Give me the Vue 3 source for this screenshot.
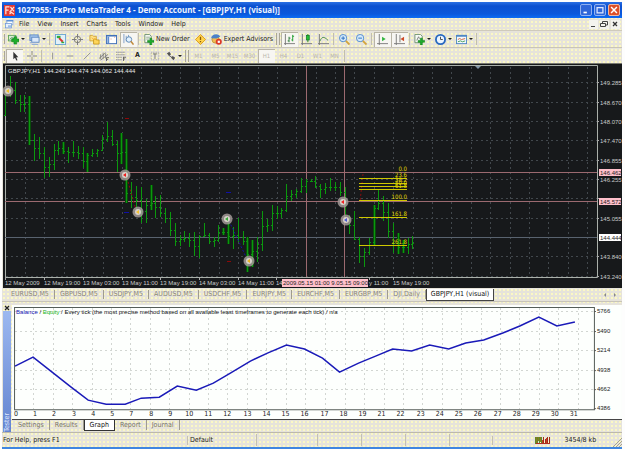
<script setup>
import { ref } from 'vue'

const icons = {
  app: '<rect width="12" height="12" fill="#e23a34"/><path d="M2 10V2h4M2 5.500h3M7 2l4 5M11 2L6 8M6 10l2-2 3 2" fill="none" stroke="#ffe4dc" stroke-width="1.300"/>',
  doc: '<rect x="2.500" y=".5" width="8" height="6" fill="#fff" stroke="#7fa5d8"/><rect x="2" y="0" width="9" height="2" fill="#5b8fd6"/><rect x=".5" y="4.500" width="8" height="6" fill="#eaf2fc" stroke="#6c98d4"/><rect x="4" y="7" width="4" height="3" fill="#9dbce8"/>',
  newChart: '<rect x=".5" y="1.500" width="8" height="6" fill="#dbead6" stroke="#5fa45c"/><path d="M2 6l2-2 2 1 2-2" stroke="#2d8a35" fill="none"/><path d="M4 5.500h2.500V3h3v2.500H12v3H9.500V11h-3V8.500H4z" fill="#1fae2b" stroke="#0d7d19" stroke-width=".6"/>',
  profiles: '<rect x="1" y="1" width="9" height="6" fill="#a9c8ee" stroke="#5b87c2"/><rect x="3" y="3.500" width="8" height="5.500" fill="#dbe9fa" stroke="#5b87c2"/><path d="M1 9.500h7M3 11.500h7" stroke="#8caad4"/>',
  market: '<rect x=".5" y=".5" width="11" height="11" fill="#e2f0f8" stroke="#6aa5cf"/><path d="M2 2h4v2.500H2z" fill="#2fae3c"/><path d="M4.500 4.500l4 4" stroke="#d83a2e" stroke-width="2.200" fill="none"/><path d="M7 8.500h3v1.500H7z" fill="#2fae3c"/>',
  target: '<circle cx="6" cy="6" r="3.500" fill="none" stroke="#777"/><path d="M6 0v5M6 7v5M0 6h5M7 6h5" stroke="#777"/>',
  folders: '<path d="M1 1.500h3l1 1h3v5H1z" fill="#ffe083" stroke="#d0a53a"/><path d="M5 5.500h2l1 1h3v4.500H5z" fill="#ffd65a" stroke="#c99b20"/><path d="M3 4l2 2 3-1" stroke="#f5b53c" fill="none"/>',
  terminal: '<rect x=".5" y="1.500" width="11" height="9" fill="#fff" stroke="#3d6fb8"/><path d="M.5 2h11" stroke="#3d6fb8" stroke-width="1.500"/><path d="M2.500 3v7" stroke="#5f8ed0" stroke-width="2"/><path d="M9 3.500h1M5 5.500h1" stroke="#d5886c"/>',
  tester: '<path d="M1 0v10M3.500 2v6M6 1v5" stroke="#7c9cc8"/><circle cx="6.500" cy="6" r="3" fill="#e3f2ff" stroke="#5a86b4"/><path d="M8.500 8l3 3.500" stroke="#c08a3c" stroke-width="1.700"/>',
  order: '<path d="M2 .5h5l2 2v7H2z" fill="#f4f8f1" stroke="#6d8f6d"/><path d="M3.500 3.500h4M3.500 5.500h3" stroke="#95a895"/><path d="M5 7h2.500V4.500h2V7H12v2H9.500v3h-2V9H5z" fill="#1fae2b" stroke="#0d7d19" stroke-width=".6"/>',
  warning: '<path d="M6 .5L11.500 6 6 11.500.5 6z" fill="#ffd34d" stroke="#d99818"/><path d="M6 3v3.500M6 7.500V9" stroke="#8b5a08" stroke-width="1.400"/>',
  expert: '<circle cx="5" cy="6" r="4" fill="#f0bd55" stroke="#b58024" stroke-width=".7"/><path d="M0 4.500c1-5.500 9-5.500 10-1.500L6 5z" fill="#4b81c8"/><circle cx="8.500" cy="8.500" r="3.300" fill="#dd3a27"/><rect x="7.300" y="7.300" width="2.400" height="2.400" fill="#fff"/>',
  bars: '<path d="M1.500 0v12M0 10.500h12" stroke="#777"/><path d="M5.500 3v6M4 7.500h1.500M5.500 4.500H7" stroke="#2a7b38"/><path d="M9.500 1v7M8 6.500h1.500M9.500 2.500H11" stroke="#169a26"/>',
  candles: '<path d="M1.500 0v12M0 10.500h12" stroke="#777"/><path d="M7.500 0v9" stroke="#147a20"/><rect x="6" y="1.500" width="3" height="5" fill="#24c236" stroke="#147a20" stroke-width=".8"/>',
  line: '<path d="M1.500 0v12M0 10.500h12" stroke="#777"/><path d="M2 8c2-5 4-6 9-1" fill="none" stroke="#498a4c"/>',
  zoomIn: '<circle cx="4.500" cy="4.500" r="4" fill="#d4e9fb" stroke="#4d88cb"/><path d="M2.500 4.500h4M4.500 2.500v4" stroke="#266dbe"/><path d="M7.500 7.500l4 4" stroke="#d3a43b" stroke-width="2"/>',
  zoomOut: '<circle cx="4.500" cy="4.500" r="4" fill="#d4e9fb" stroke="#4d88cb"/><path d="M2.500 4.500h4" stroke="#266dbe"/><path d="M7.500 7.500l4 4" stroke="#d3a43b" stroke-width="2"/>',
  scroll: '<path d="M2.500 0v12M0 10.500h12" stroke="#777"/><path d="M5.500 3l4 2.500-4 2.500z" fill="#33b540"/>',
  shift: '<path d="M2.500 0v12M0 10.500h12M6.500 1v8" stroke="#777"/><path d="M11 3l-4 2.500L11 8z" fill="#cf4a26"/>',
  indicator: '<path d="M1 .5h6l2 2v7H1z" fill="#f7faf5" stroke="#6d8f6d"/><path d="M3 7l2-4 1 2" fill="none" stroke="#777"/><path d="M4.500 7H7V4.500h2V7h2.500v2H9v3H7V9H4.500z" fill="#1fae2b" stroke="#0d7d19" stroke-width=".6"/>',
  clock: '<circle cx="6" cy="6" r="5" fill="#eaf4ff" stroke="#2869c0" stroke-width="2"/><path d="M6 3v3h2.500" fill="none" stroke="#444"/>',
  template: '<rect x=".5" y="1.500" width="11" height="9" fill="#f3f9ff" stroke="#4e86c4"/><path d="M.5 2h11" stroke="#4e86c4" stroke-width="2"/><path d="M2 6l2-1 2 1 4-1" fill="none" stroke="#c9603a"/><path d="M2 8.500l3-1 2 1 3-1" fill="none" stroke="#3f9a50"/>',
  cursor: '<path d="M4 1v9l2-2 1.500 3.500L9 11 7.500 7.500H10z" fill="#333"/>',
  cross: '<path d="M6 0v5M6 7v5M0 6h5M7 6h5" stroke="#777"/>',
  vline: '<path d="M5.500 2v8" stroke="#888"/>',
  hline: '<path d="M2 6h8" stroke="#888"/>',
  trend: '<path d="M2 10l8-8" stroke="#888"/>',
  channel: '<path d="M0 9l8-7M2 11l9-7M2 4v6M5 2v7M8 3v6" stroke="#777" fill="none"/><path d="M9 8h3M9 8v4M9 10h2" stroke="#555" fill="none"/>',
  fibo: '<path d="M0 1.500h11M0 4.500h11M0 7.500h7M0 10.500h7" stroke="#888" stroke-dasharray="2 .5"/><path d="M9 7v5M9 7.500h3M9 9.500h2" stroke="#555"/>',
  label: '<rect x="1.500" y="1.500" width="9" height="9" fill="none" stroke="#999" stroke-dasharray="1 1"/><path d="M3.500 3.500h5M6 3.500v6" stroke="#666"/>',
  arrows: '<path d="M1 3l3-2 2 3-2 2zM6 8l2-2 3 2-2 3z" fill="#555"/><path d="M3 5l6 4" stroke="#555"/>',
}

const menus = ['File', 'View', 'Insert', 'Charts', 'Tools', 'Window', 'Help']

const mainBar = [
  { icon: 'newChart', drop: true, name: 'New chart' },
  { icon: 'profiles', drop: true, name: 'Profiles' },
  { sep: true },
  { icon: 'market', name: 'Market Watch' },
  { icon: 'target', name: 'Data Window' },
  { icon: 'folders', name: 'Navigator' },
  { icon: 'terminal', name: 'Terminal' },
  { icon: 'tester', on: true, name: 'Strategy Tester' },
  { sep: true },
  { icon: 'order', text: 'New Order' },
  { icon: 'warning', name: 'MetaEditor' },
  { icon: 'expert', text: 'Expert Advisors' },
  { sep: true, grip: true },
  { icon: 'bars', on: true, name: 'Bar chart' },
  { icon: 'candles', name: 'Candlesticks' },
  { icon: 'line', name: 'Line chart' },
  { sep: true },
  { icon: 'zoomIn', name: 'Zoom in' },
  { icon: 'zoomOut', name: 'Zoom out' },
  { sep: true },
  { icon: 'scroll', on: true, name: 'Auto scroll' },
  { icon: 'shift', on: true, name: 'Chart shift' },
  { sep: true },
  { icon: 'indicator', drop: true, name: 'Indicators' },
  { icon: 'clock', drop: true, name: 'Periods' },
  { icon: 'template', drop: true, name: 'Templates' },
  { sep: true },
]

const lineTools = [
  { icon: 'cursor', on: true, name: 'Cursor' },
  { icon: 'cross', name: 'Crosshair' },
  { sep: true },
  { icon: 'vline', name: 'Vertical line' },
  { icon: 'hline', name: 'Horizontal line' },
  { icon: 'trend', name: 'Trendline' },
  { icon: 'channel', name: 'Channel' },
  { icon: 'fibo', name: 'Fibonacci' },
  { glyph: 'A', name: 'Text' },
  { icon: 'label', name: 'Text label' },
  { icon: 'arrows', drop: true, name: 'Arrows' },
  { sep: true, grip: true },
]
const periods = ['M1', 'M5', 'M15', 'M30', 'H1', 'H4', 'D1', 'W1', 'MN']

// High and low of every hourly bar, in chart units.
const bars = [
  [88, 115], [76, 97], [82, 104], [95, 112], [95, 112], [96, 145], [134, 161], [137, 159], [147, 178],
  [157, 177], [144, 170], [141, 155], [142, 154], [147, 163], [141, 157], [146, 159], [147, 168],
  [153, 172], [149, 157], [149, 157], [135, 150], [122, 142], [130, 146], [141, 172], [133, 164],
  [139, 203], [182, 208], [186, 212], [187, 223], [199, 223], [185, 210], [196, 218], [195, 217],
  [208, 223], [212, 236], [223, 246], [235, 246], [231, 242], [233, 247], [232, 256], [235, 258],
  [223, 237], [233, 244], [237, 247], [225, 242], [228, 235], [220, 244], [227, 249], [218, 242],
  [231, 245], [237, 272], [240, 267], [237, 262], [211, 251], [219, 232], [205, 231], [206, 219],
  [208, 218], [184, 212], [190, 201], [189, 198], [178, 193], [179, 193], [179, 182], [176, 188],
  [184, 198], [183, 194], [178, 191], [182, 191], [182, 196], [187, 222], [215, 234], [211, 240],
  [237, 263], [248, 267], [238, 255], [205, 245], [189, 210], [196, 221], [203, 238], [223, 253],
  [233, 254], [240, 253], [238, 254], [236, 249],
]
const barX = (i) => Math.round(5 + i * 4.85)
const closeOf = (i) => {
  const a = bars[i]
  const b = bars[i + 1] || a
  return Math.round((Math.max(a[0], b[0]) + Math.min(a[1], b[1])) / 2)
}
const barPath = bars
  .map(([h, l], i) => {
    const x = barX(i)
    const open = i ? closeOf(i - 1) : l
    return `M${x + 0.5} ${h}V${l}M${x - 1} ${open + 0.5}h2M${x} ${closeOf(i) + 0.5}h2`
  })
  .join('')
const heavyBars = [5, 12, 17, 24, 25, 30, 45, 46, 50, 51, 76, 81, 82].map((i) => ({ x: barX(i), h: bars[i][0], l: bars[i][1] }))

const gridX = Array.from({ length: 30 }, (_, i) => Math.round(25 + i * 19.38)).filter((x) => x < 594)
const prices = [
  ['149.285', 82], ['148.670', 102], ['148.070', 121], ['147.470', 140], ['146.855', 160],
  ['146.255', 179], ['', 198], ['145.055', 218], ['143.840', 256], ['143.240', 276],
]
const dates = [
  ['12 May 2009', 5], ['12 May 19:00', 44], ['13 May 03:00', 83], ['13 May 11:00', 122], ['13 May 19:00', 160],
  ['14 May 03:00', 199], ['14 May 11:00', 238], ['14', 276], ['y 11:00', 369], ['15 May 19:00', 393],
]
const fibs = [
  ['0.0', 172], ['23.6', 178], ['38.2', 183], ['50.0', 186], ['61.8', 189], ['100.0', 200], ['161.8', 217], ['261.8', 245],
]
const marks = [
  { x: 8, y: 91, c: '#f0c020' }, { x: 125, y: 175, c: '#f01818' }, { x: 138, y: 212, c: '#f5c030' },
  { x: 227, y: 219, c: '#38a838' }, { x: 249, y: 261, c: '#e8b020' }, { x: 343, y: 202, c: '#f02020' }, { x: 346, y: 220, c: '#4858d0' },
]

const chartTabs = ['EURUSD,M5', 'GBPUSD,M5', 'USDJPY,M5', 'AUDUSD,M5', 'USDCHF,M5', 'EURJPY,M5', 'EURCHF,M5', 'EURGBP,M5', 'DJI,Daily', 'GBPJPY,H1 (visual)']
const chartTab = ref('GBPJPY,H1 (visual)')
const testerTabs = ['Settings', 'Results', 'Graph', 'Report', 'Journal']
const testerTab = ref('Graph')

const balance = '15,366 33,357 52,372 71,387 88,400 106,404 125,404 141,398 159,397 177,386 196,390 213,383 230,373 250,361 267,353 286,345 304,349 322,358 339,372 358,363 375,356 392,349 411,351 429,345 448,349 465,343 483,340 502,333 519,326 538,317 556,326 574,322'
const trades = [0, 1, 2, 3, 4, 5, 7, 8, 9, 10, 11, 12, 13, 14, 15, 16, 17, 18, 19, 21, 22, 23, 24, 25, 26, 27, 28, 29, 30, 31]
const levels = [[5766, 311], [5490, 331], [5214, 350], [4938, 370], [4662, 389], [4386, 408]]
</script>

<template>
  <div class="window">
    <header class="title">
      <svg class="ico" viewBox="0 0 12 12" v-html="icons.app"></svg>
      <h1>1027955: FxPro MetaTrader 4 - Demo Account - [GBPJPY,H1 (visual)]</h1>
      <button class="win" aria-label="Minimize"><svg viewBox="0 0 12 12"><path d="M3 9h4" stroke="#fff" stroke-width="2" /></svg></button>
      <button class="win" aria-label="Restore"><svg viewBox="0 0 12 12"><path d="M2.500 3h7v6.500h-7z" fill="none" stroke="#dfe9ff" stroke-width="1.500" /></svg></button>
      <button class="win close" aria-label="Close"><svg viewBox="0 0 12 12"><path d="M2.500 2.500l7 7M9.500 2.500l-7 7" stroke="#fff" stroke-width="1.800" /></svg></button>
    </header>

    <nav class="menu">
      <svg class="ico" viewBox="0 0 12 12" v-html="icons.doc"></svg>
      <button v-for="m in menus" :key="m">{{ m }}</button>
      <span class="fill"></span>
      <button class="mdi" aria-label="Minimize chart"><svg viewBox="0 0 8 8"><path d="M2 6.500h4" stroke="#444" /></svg></button>
      <button class="mdi" aria-label="Restore chart"><svg viewBox="0 0 8 8"><path d="M2.500 3V1.500h5V5H6M.5 3.500h5v3h-5z" fill="none" stroke="#444" /></svg></button>
      <button class="mdi" aria-label="Close chart"><svg viewBox="0 0 8 8"><path d="M2 2l4 4M6 2L2 6" stroke="#333" stroke-width="1.300" /></svg></button>
    </nav>

    <div class="bar">
      <i class="grip"></i>
      <template v-for="(b, i) in mainBar" :key="i">
        <i v-if="b.sep" :class="['sep', { wide: b.grip }]"></i>
        <button v-else :class="['tool', { on: b.on, drop: b.drop, worded: b.text }]" :aria-label="b.name">
          <svg class="ico" viewBox="0 0 12 12" v-html="icons[b.icon]"></svg>
          <span v-if="b.text">{{ b.text }}</span>
          <i v-if="b.drop" class="caret"></i>
        </button>
      </template>
    </div>
    <div class="bar second">
      <i class="grip"></i>
      <template v-for="(b, i) in lineTools" :key="i">
        <i v-if="b.sep" :class="['sep', { wide: b.grip }]"></i>
        <button v-else :class="['tool', { on: b.on, drop: b.drop }]" :aria-label="b.name">
          <b v-if="b.glyph">{{ b.glyph }}</b>
          <svg v-else class="ico" viewBox="0 0 12 12" v-html="icons[b.icon]"></svg>
          <i v-if="b.drop" class="caret"></i>
        </button>
      </template>
      <button v-for="p in periods" :key="p" :class="['tool', 'period', { on: p === 'H1' }]" disabled>{{ p }}</button>
      <i class="sep"></i>
    </div>

    <svg class="chart" viewBox="3 63 619 225">
      <rect x="3" y="63" width="619" height="225" fill="#17191b" />
      <path d="M3 63.500h619" stroke="#77776f" />
      <g class="grid">
        <path v-for="x in gridX" :key="x" :d="`M${x + 0.5} 67V277`" />
        <path v-for="p in prices" :key="p[1]" :d="`M6 ${p[1] + 0.5}H597`" />
      </g>
      <path d="M5.500 277.500V65.500H597.500V277.500Z" fill="none" stroke="#aab0aa" />
      <path d="M475 66h6l-3 3z" fill="#8296a6" />
      <path d="M5 237.500H597" stroke="#59636f" />
      <g class="crisp" stroke="#9c6a70">
        <path d="M5 172.500H597M5 201.500H597M306.500 66V277M344.500 66V277" />
      </g>
      <g class="crisp">
        <rect v-for="b in heavyBars" :key="b.x" :x="b.x - 1" :y="b.h" width="3" :height="b.l - b.h" fill="#084c0a" />
        <path :d="barPath" stroke="#0b980e" fill="none" />
      </g>
      <g class="crisp">
        <path d="M125 118.500h4M227 261.500h4" stroke="#8c0808" />
        <path d="M124 212.500h5M226 192.500h5" stroke="#1010a8" />
      </g>
      <path d="M127 178L136 210M363 174L360 202" stroke="#8c0c0c" stroke-dasharray="2 2" />
      <path d="M229 221L247 259" stroke="#1414a0" stroke-dasharray="2 2" />
      <g v-for="m in marks" :key="m.x">
        <circle :cx="m.x" :cy="m.y" r="5.500" fill="#a39a98" fill-opacity=".85" />
        <circle :cx="m.x" :cy="m.y" r="3" fill="#d8d2ca" />
        <path :d="`M${m.x - 2} ${m.y}l3-2v4z`" :fill="m.c" />
      </g>
      <g v-for="f in fibs" :key="f[0]">
        <path v-if="f[1] > 172" class="crisp" :d="`M359 ${f[1] + 0.5}h48`" stroke="#cfc800" />
        <text x="407" :y="f[1] - 1" text-anchor="end" class="fib">{{ f[0] }}</text>
      </g>
      <text x="8" y="73" class="lbl light">GBPJPY,H1&nbsp; 144.249 144.474 144.062 144.444</text>
      <g v-for="p in prices" :key="p[1]">
        <path :d="`M597 ${p[1] + 0.5}h2`" stroke="#aaa" />
        <text v-if="p[0]" x="600" :y="p[1] + 3" class="lbl">{{ p[0] }}</text>
      </g>
      <g v-for="d in dates" :key="d[0]">
        <path :d="`M${d[1] + 0.5} 277v3`" stroke="#aaa" />
        <text :x="d[1]" y="285" class="lbl">{{ d[0] }}</text>
      </g>
      <rect x="599" y="169" width="22" height="7" fill="#ffc0cb" />
      <text x="600" y="175" class="lbl dark">146.462</text>
      <rect x="599" y="198" width="22" height="7" fill="#ffc0cb" />
      <text x="600" y="204" class="lbl dark">145.572</text>
      <rect x="599" y="234" width="22" height="7" fill="#fff" />
      <text x="600" y="240" class="lbl dark">144.444</text>
      <rect x="282" y="279" width="86" height="8" fill="#ffc0cb" />
      <text x="283" y="285" class="lbl dark">2009.05.15 01:00</text>
      <text x="368" y="285" text-anchor="end" class="lbl dark">9.05.15 09:00</text>
    </svg>

    <div class="sheets">
      <button v-for="t in chartTabs" :key="t" :class="{ active: t === chartTab }" @click="chartTab = t">{{ t }}</button>
      <span class="fill"></span>
      <button class="nudge" aria-label="Scroll tabs left"><svg viewBox="0 0 4 6"><path d="M3 1v4L1 3z" fill="#888" /></svg></button>
      <button class="nudge" aria-label="Scroll tabs right"><svg viewBox="0 0 4 6"><path d="M1 1v4l2-2z" fill="#888" /></svg></button>
    </div>

    <section class="tester">
      <aside>
        <button aria-label="Close tester"><svg viewBox="0 0 6 6"><path d="M1 1l4 4M5 1L1 5" stroke="#222" stroke-width="1.200" /></svg></button>
        <div class="side"><span>Tester</span></div>
      </aside>
      <div class="pane">
        <svg class="graph" viewBox="12 305 609 114">
          <rect x="12" y="305" width="609" height="114" fill="#fdfffd" />
          <g class="soft">
            <path v-for="i in 29" :key="i" :d="`M${Math.round(15 + i * 19.4) - 0.5} 308V409`" />
            <path v-for="l in levels.slice(0, 5)" :key="l[0]" :d="`M15 ${l[1] + 0.5}H593`" />
          </g>
          <path d="M14.500 307.500H593.500V409.500H14.500Z" fill="none" stroke="#555d58" />
          <polyline :points="balance" fill="none" stroke="#1a1ab8" stroke-width="1.500" />
          <text x="16" y="314" class="note"><tspan fill="#1414b4">Balance</tspan> / <tspan fill="#12b412">Equity</tspan> / Every tick (the most precise method based on all available least timeframes to generate each tick) / n/a</text>
          <text v-for="(t, i) in trades" :key="t" :x="Math.round(16 + i * 19.22)" y="416" text-anchor="middle" class="num">{{ t }}</text>
          <g v-for="l in levels" :key="l[0]">
            <path :d="`M593 ${l[1] + 0.5}h2`" stroke="#555" />
            <text x="596" :y="l[1] + 2" class="lbl dark">{{ l[0] }}</text>
          </g>
        </svg>
        <div class="tabs">
          <button v-for="t in testerTabs" :key="t" :class="{ active: t === testerTab }" @click="testerTab = t">{{ t }}</button>
        </div>
      </div>
    </section>

    <footer class="status">
      <span class="help">For Help, press F1</span>
      <span class="profile">Default</span>
      <span class="cell first"></span>
      <span class="cell"></span><span class="cell"></span><span class="cell"></span><span class="cell"></span>
      <span class="traffic">
        <svg viewBox="0 0 15 7"><path d="M.5 0v7M2.500 0v7M4.500 0v7M6.500 0v7" stroke="#5f8b24" /><path d="M1.500 0v7M3.500 0v4M5.500 0v5" stroke="#8c7a20" /><path d="M8.500 0v7M10.500 2v5M12.500 0v7M14.500 0v7" stroke="#a02c18" /><path d="M7.500 3v4M11.500 1v6" stroke="#c43a24" /><path d="M1 6.500h14" stroke="#b03020" /></svg>
        3454/8 kb
      </span>
      <svg class="resize" viewBox="0 0 9 9"><path d="M0 9l9-9M3 9l6-6M6 9l3-3" stroke="#a5a294" /></svg>
    </footer>
    <div class="edge"></div>
  </div>
</template>

<style>
body {
  background: #fdfdfd;
}
</style>

<style scoped>
.window {
  display: flex;
  flex-direction: column;
  margin: 0 3px 0 2px;
  padding-top: 2px;
  font-family: 'DejaVu Sans Condensed', 'DejaVu Sans', Tahoma, sans-serif;
  font-size: 7px;
  line-height: 9px;
  color: #222;
  background-color: #e6e3da;
  background-image: radial-gradient(circle, #fbf8c4 0 1px, transparent 1px);
  background-size: 4px 4px;
  background-clip: content-box;
}
button {
  border: 0;
  padding: 0;
  margin: 0;
  background: none;
  font: inherit;
  color: inherit;
  white-space: nowrap;
}
svg {
  display: block;
  flex: none;
}
.ico {
  width: 11px;
  height: 11px;
}
.fill {
  flex: 1;
}
.title {
  display: flex;
  align-items: center;
  gap: 1px;
  height: 16px;
  padding: 0 2px;
  background: linear-gradient(#2a70e4, #0c50d0 25%, #0a58dc 75%, #0c6cf4);
}
h1 {
  flex: 1;
  margin: 0;
  padding-left: 1px;
  font: bold 8px/12px 'Noto Sans', 'Open Sans', sans-serif;
  color: #eef4ff;
  white-space: nowrap;
}
.win {
  width: 12px;
  height: 12px;
  border: 1px solid #8fb0f0;
  border-radius: 2px;
  background: #2f66d8;
}
.win + .win {
  margin-left: 1px;
}
.win.close {
  background: #dc5028;
  border-color: #f0b8a0;
}
.menu {
  display: flex;
  align-items: center;
  gap: 8px;
  height: 13px;
  padding: 0 2px 0 3px;
  border-bottom: 1px solid #cfcabb;
  box-sizing: border-box;
}
.menu .ico {
  width: 9px;
  height: 9px;
  margin-right: -3px;
}
.mdi {
  width: 9px;
  height: 9px;
  background: #f4f3ee;
  margin-left: -6px;
}
.mdi svg {
  width: 8px;
  height: 8px;
}
.bar {
  display: flex;
  align-items: center;
  height: 17px;
  border-bottom: 1px solid #c9c5b6;
  box-sizing: border-box;
}
.bar.second {
  height: 15px;
  border-bottom: 0;
}
.grip {
  width: 1px;
  height: 10px;
  margin: 0 1px 0 2px;
  background: #aaa695;
}
.sep {
  width: 1px;
  height: 12px;
  margin: 0 2px 0 1px;
  background: #c2beae;
}
.sep.wide {
  width: 2px;
  margin: 0 1px;
  border-left: 1px solid #aaa695;
  border-right: 1px solid #aaa695;
  background: none;
  box-sizing: content-box;
}
.tool {
  display: flex;
  align-items: center;
  justify-content: center;
  gap: 2px;
  width: 17px;
  height: 15px;
  flex: none;
}
.second .tool {
  height: 14px;
}
.tool.drop {
  width: 21px;
}
.tool.worded {
  width: auto;
  padding: 0 2px;
}
.tool.on {
  background: #f7f6f2;
  box-shadow: inset 1px 1px #b9b5a6;
}
.second .ico {
  width: 10px;
  height: 10px;
}
.period {
  color: #bab6aa;
  font-size: 6px;
}
.caret {
  border: 2px solid transparent;
  border-top-color: #222;
  border-bottom: 0;
}
.chart,
.graph {
  width: 100%;
  height: auto;
}
.chart {
  padding-left: 1px;
  box-sizing: border-box;
}
.crisp,
.grid,
.soft {
  shape-rendering: crispEdges;
}
.grid {
  stroke: #42484d;
  stroke-dasharray: 2 3;
}
.soft {
  stroke: #d2d6d2;
  stroke-dasharray: 2 3;
}
.lbl {
  font-family: 'Liberation Sans', Arial, sans-serif;
  font-size: 6px;
  fill: #c8caca;
}
.light {
  fill: #e6e8e8;
}
.dark {
  fill: #222;
}
.num {
  font-size: 7px;
  fill: #222;
}
.note {
  font-family: 'Liberation Sans', Arial, sans-serif;
  font-size: 6px;
  fill: #111;
}
.fib {
  font-size: 6px;
  fill: #e0dc00;
}
.sheets {
  display: flex;
  height: 13px;
  padding: 0 2px 0 4px;
  align-items: center;
}
.sheets button {
  padding: 0 5px;
  border-right: 1px solid #a09c8e;
  color: #88857a;
}
.sheets .active {
  padding: 1px 4px;
  background: #fff;
  border: 1px solid #444;
  border-top: 0;
  color: #111;
}
.sheets .nudge {
  padding: 0 3px;
  border: 0;
}
.nudge svg {
  width: 4px;
  height: 6px;
}
.tester {
  display: flex;
  border-top: 1px solid #c9c5b8;
  padding-top: 3px;
}
aside {
  display: flex;
  flex-direction: column;
  align-items: center;
  width: 10px;
}
aside svg {
  width: 6px;
  height: 6px;
}
.side {
  flex: 1;
  width: 8px;
  display: flex;
  align-items: flex-end;
  background: linear-gradient(#9cb8f0, #6484d0);
  color: #dfe8ff;
}
.side span {
  writing-mode: vertical-rl;
  transform: rotate(180deg);
  line-height: 8px;
}
.pane {
  flex: 1;
  min-width: 0;
}
.tabs {
  display: flex;
  height: 13px;
  padding-left: 1px;
  align-items: flex-start;
  border-top: 1px solid #444;
  box-sizing: border-box;
}
.tabs button {
  padding: 1px 5px 0;
  border-right: 1px solid #a09c8e;
  color: #77746a;
}
.tabs .active {
  background: #fff;
  border: 1px solid #333;
  border-top: 0;
  color: #111;
}
.status {
  display: flex;
  align-items: center;
  height: 15px;
  border-top: 1px solid #bdb9aa;
  box-sizing: border-box;
}
.status span {
  border-left: 1px solid #c4c0b2;
  box-sizing: border-box;
}
.status .help {
  flex: 185;
  border-left: 0;
  padding-left: 1px;
}
.status .profile {
  flex: 66;
  padding-left: 2px;
}
.cell {
  flex: 43;
  height: 12px;
}
.cell.first {
  flex: 61;
}
.status .traffic {
  flex: 78;
  display: flex;
  align-items: center;
  gap: 14px;
  padding-left: 42px;
}
.traffic svg {
  width: 15px;
  height: 7px;
}
.resize {
  width: 9px;
  height: 9px;
  align-self: flex-end;
}
.edge {
  height: 2px;
  background: #3f86e0;
}
</style>
